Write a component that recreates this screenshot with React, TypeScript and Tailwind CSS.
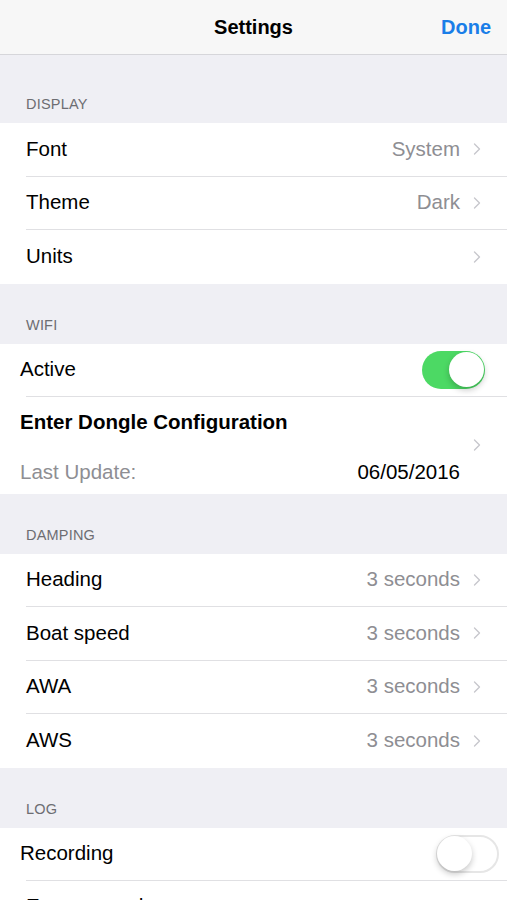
import { ChevronRight } from 'lucide-react'

const FONT = { fontFamily: '"Liberation Sans", Arial, sans-serif' }

function Chevron() {
  return <ChevronRight className="size-[20px] text-[#c7c7cc] -mr-[4px]" strokeWidth={1.6} />
}

function SectionHeader({ title, tall }: { title: string; tall?: boolean }) {
  return (
    <div className={`flex items-end px-[26px] pb-[7px] ${tall ? 'h-[68px]' : 'h-[60px]'}`}>
      <span className="text-[14.5px] tracking-[0.2px] text-[#6d6d72]">{title}</span>
    </div>
  )
}

function Row({ label, value, last }: { label: string; value?: string; last?: boolean }) {
  return (
    <div className="h-[53.5px] pl-[26px] bg-white">
      <div className={`flex h-full items-center pr-[24px] ${last ? '' : 'border-b border-[#e0e0e3]'}`}>
        <span className="flex-1 text-[20.5px] text-black">{label}</span>
        {value && <span className="mr-[7px] text-[20.5px] text-[#8e8e93]">{value}</span>}
        <Chevron />
      </div>
    </div>
  )
}

function Toggle({ on }: { on: boolean }) {
  return (
    <div
      className={`relative h-[38px] w-[63px] rounded-full ${
        on ? 'bg-[#4cd964]' : 'bg-white border-[2px] border-[#e6e6e6]'
      }`}
    >
      <div
        className={`absolute size-[35px] rounded-full bg-white shadow-[0_3px_6px_rgba(0,0,0,0.22)] ${
          on ? 'right-[1px] top-[1.5px]' : 'left-[-1px] top-[-1px]'
        }`}
      />
    </div>
  )
}

export default function App() {
  return (
    <div className="h-[900px] w-[507px] overflow-hidden bg-[#efeff4]" style={FONT}>
      <div className="relative flex h-[55px] items-center justify-center border-b border-[#d6d6da] bg-[#f7f7f7]">
        <span className="text-[20px] font-bold text-black">Settings</span>
        <span className="absolute right-[16px] text-[20px] font-bold text-[#1a7ee8]">Done</span>
      </div>

      <SectionHeader title="DISPLAY" tall />
      <div>
        <Row label="Font" value="System" />
        <Row label="Theme" value="Dark" />
        <Row label="Units" last />
      </div>

      <SectionHeader title="WIFI" />
      <div className="bg-white">
        <div className="h-[53px] pl-[26px]">
          <div className="flex h-full items-center border-b border-[#e0e0e3] pr-[22px]">
            <span className="-ml-[6px] flex-1 text-[20.5px] text-black">Active</span>
            <Toggle on />
          </div>
        </div>
        <div className="flex h-[97px] items-center pl-[20px] pr-[24px]">
          <div className="flex flex-1 flex-col gap-[25px] pt-[2px]">
            <span className="text-[20.5px] font-bold leading-[25px] text-black">Enter Dongle Configuration</span>
            <div className="flex items-center justify-between pr-[7px] leading-[25px]">
              <span className="text-[20.5px] text-[#8e8e93]">Last Update:</span>
              <span className="text-[20.5px] text-black">06/05/2016</span>
            </div>
          </div>
          <Chevron />
        </div>
      </div>

      <SectionHeader title="DAMPING" />
      <div>
        <Row label="Heading" value="3 seconds" />
        <Row label="Boat speed" value="3 seconds" />
        <Row label="AWA" value="3 seconds" />
        <Row label="AWS" value="3 seconds" last />
      </div>

      <SectionHeader title="LOG" />
      <div className="bg-white">
        <div className="h-[53px] pl-[26px]">
          <div className="flex h-full items-center border-b border-[#e0e0e3] pr-[8px]">
            <span className="-ml-[6px] flex-1 text-[20.5px] text-black">Recording</span>
            <Toggle on={false} />
          </div>
        </div>
        <Row label="Erase records" />
      </div>
    </div>
  )
}
